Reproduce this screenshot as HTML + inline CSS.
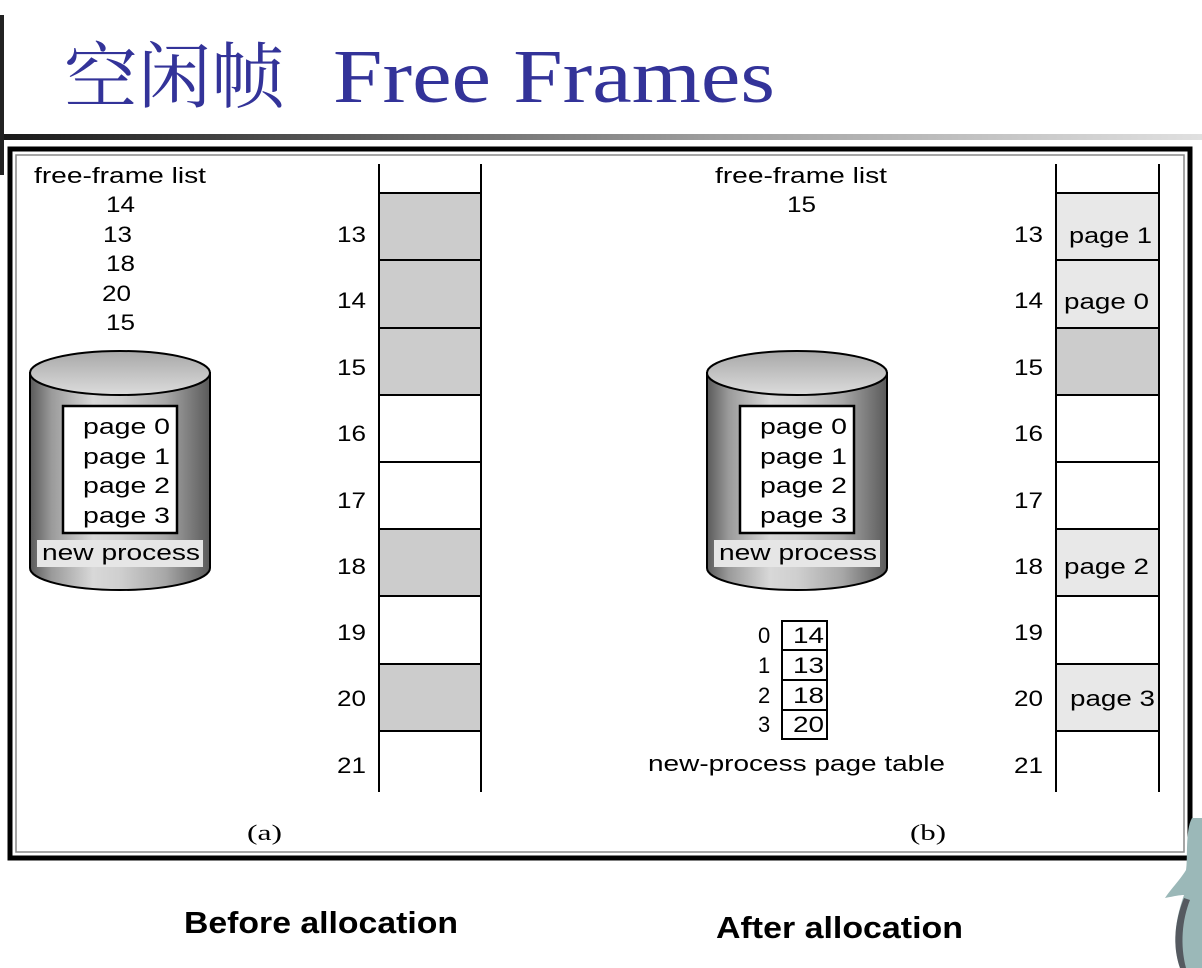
<!DOCTYPE html>
<html><head><meta charset="utf-8"><style>
html,body{margin:0;padding:0;background:#fff;width:1202px;height:968px;overflow:hidden}
svg text{font-family:"Liberation Sans",sans-serif}
</style></head><body>
<svg width="1202" height="968" viewBox="0 0 1202 968" xmlns="http://www.w3.org/2000/svg">
<defs>
<linearGradient id="hl" x1="0" x2="1"><stop offset="0" stop-color="#1a1a1a"/><stop offset="0.6" stop-color="#a0a0a0"/><stop offset="1" stop-color="#e0e0e0"/></linearGradient>
<linearGradient id="cyl" x1="0" x2="1">
<stop offset="0" stop-color="#5a5a5a"/><stop offset="0.12" stop-color="#9a9a9a"/><stop offset="0.35" stop-color="#d8d8d8"/><stop offset="0.5" stop-color="#cfcfcf"/><stop offset="0.75" stop-color="#a8a8a8"/><stop offset="1" stop-color="#5a5a5a"/></linearGradient>
<linearGradient id="top" x1="0" y1="0" x2="0" y2="1"><stop offset="0" stop-color="#a8a8a8"/><stop offset="1" stop-color="#dcdcdc"/></linearGradient>
</defs>
<rect x="0" y="15" width="4" height="160" fill="#222"/>
<rect x="4" y="134" width="1198" height="6" fill="url(#hl)"/>
<text x="64" y="102" font-size="72" fill="#333399" textLength="221" lengthAdjust="spacingAndGlyphs" style="font-family:'Noto Serif CJK SC',serif">空闲帧</text>
<text x="333" y="102" font-size="76" fill="#333399" textLength="442" lengthAdjust="spacingAndGlyphs" style="font-family:'Liberation Serif',serif">Free Frames</text>
<rect x="10" y="149" width="1180" height="709" fill="#fff" stroke="#000" stroke-width="5"/>
<rect x="16" y="155" width="1168" height="697" fill="none" stroke="#888" stroke-width="1.5"/>

<g>
<rect x="379" y="193" width="102" height="201" fill="#cccccc"/>
<rect x="379" y="529" width="102" height="67" fill="#cccccc"/>
<rect x="379" y="664" width="102" height="67" fill="#cccccc"/>
<g stroke="#000" stroke-width="2">
<line x1="379" y1="164" x2="379" y2="792"/><line x1="481" y1="164" x2="481" y2="792"/>
<line x1="379" y1="193" x2="481" y2="193"/><line x1="379" y1="260" x2="481" y2="260"/><line x1="379" y1="328" x2="481" y2="328"/><line x1="379" y1="395" x2="481" y2="395"/><line x1="379" y1="462" x2="481" y2="462"/><line x1="379" y1="529" x2="481" y2="529"/><line x1="379" y1="596" x2="481" y2="596"/><line x1="379" y1="664" x2="481" y2="664"/><line x1="379" y1="731" x2="481" y2="731"/>
</g>
<g font-size="22" fill="#000" lengthAdjust="spacingAndGlyphs">
<text x="337" y="242" textLength="29" lengthAdjust="spacingAndGlyphs">13</text><text x="337" y="308" textLength="29" lengthAdjust="spacingAndGlyphs">14</text><text x="337" y="375" textLength="29" lengthAdjust="spacingAndGlyphs">15</text><text x="337" y="441" textLength="29" lengthAdjust="spacingAndGlyphs">16</text><text x="337" y="508" textLength="29" lengthAdjust="spacingAndGlyphs">17</text><text x="337" y="574" textLength="29" lengthAdjust="spacingAndGlyphs">18</text><text x="337" y="640" textLength="29" lengthAdjust="spacingAndGlyphs">19</text><text x="337" y="706" textLength="29" lengthAdjust="spacingAndGlyphs">20</text><text x="337" y="773" textLength="29" lengthAdjust="spacingAndGlyphs">21</text>
</g>
</g>
<g>
<rect x="1056" y="193" width="103" height="134" fill="#e8e8e8"/>
<rect x="1056" y="328" width="103" height="67" fill="#cccccc"/>
<rect x="1056" y="529" width="103" height="67" fill="#e8e8e8"/>
<rect x="1056" y="664" width="103" height="67" fill="#e8e8e8"/>
<g stroke="#000" stroke-width="2">
<line x1="1056" y1="164" x2="1056" y2="792"/><line x1="1159" y1="164" x2="1159" y2="792"/>
<line x1="1056" y1="193" x2="1159" y2="193"/><line x1="1056" y1="260" x2="1159" y2="260"/><line x1="1056" y1="328" x2="1159" y2="328"/><line x1="1056" y1="395" x2="1159" y2="395"/><line x1="1056" y1="462" x2="1159" y2="462"/><line x1="1056" y1="529" x2="1159" y2="529"/><line x1="1056" y1="596" x2="1159" y2="596"/><line x1="1056" y1="664" x2="1159" y2="664"/><line x1="1056" y1="731" x2="1159" y2="731"/>
</g>
<g font-size="22" fill="#000">
<text x="1014" y="242" textLength="29" lengthAdjust="spacingAndGlyphs">13</text><text x="1014" y="308" textLength="29" lengthAdjust="spacingAndGlyphs">14</text><text x="1014" y="375" textLength="29" lengthAdjust="spacingAndGlyphs">15</text><text x="1014" y="441" textLength="29" lengthAdjust="spacingAndGlyphs">16</text><text x="1014" y="508" textLength="29" lengthAdjust="spacingAndGlyphs">17</text><text x="1014" y="574" textLength="29" lengthAdjust="spacingAndGlyphs">18</text><text x="1014" y="640" textLength="29" lengthAdjust="spacingAndGlyphs">19</text><text x="1014" y="706" textLength="29" lengthAdjust="spacingAndGlyphs">20</text><text x="1014" y="773" textLength="29" lengthAdjust="spacingAndGlyphs">21</text>
<text x="1069" y="243" textLength="83" lengthAdjust="spacingAndGlyphs">page 1</text><text x="1064" y="309" textLength="85" lengthAdjust="spacingAndGlyphs">page 0</text><text x="1064" y="574" textLength="85" lengthAdjust="spacingAndGlyphs">page 2</text><text x="1070" y="706" textLength="85" lengthAdjust="spacingAndGlyphs">page 3</text>
</g>
</g>

<g font-size="22" fill="#000">
<text x="34" y="183" textLength="172" lengthAdjust="spacingAndGlyphs">free-frame list</text>
<text x="106" y="212" textLength="29" lengthAdjust="spacingAndGlyphs">14</text><text x="103" y="242" textLength="29" lengthAdjust="spacingAndGlyphs">13</text><text x="106" y="271" textLength="29" lengthAdjust="spacingAndGlyphs">18</text><text x="102" y="301" textLength="29" lengthAdjust="spacingAndGlyphs">20</text><text x="106" y="330" textLength="29" lengthAdjust="spacingAndGlyphs">15</text>
<text x="715" y="183" textLength="172" lengthAdjust="spacingAndGlyphs">free-frame list</text><text x="787" y="212" textLength="29" lengthAdjust="spacingAndGlyphs">15</text>
</g>

<g id="cy">
<path d="M30 373 L30 568 A90 22 0 0 0 210 568 L210 373 Z" fill="url(#cyl)" stroke="#000" stroke-width="2"/>
<ellipse cx="120" cy="373" rx="90" ry="22" fill="url(#top)" stroke="#000" stroke-width="2"/>
<rect x="63" y="406" width="114" height="127" fill="#fff" stroke="#000" stroke-width="2.5"/>
<rect x="37" y="540" width="166" height="27" fill="#e6e6e6"/>
<g font-size="22" fill="#000">
<text x="83" y="434" textLength="87" lengthAdjust="spacingAndGlyphs">page 0</text><text x="83" y="464" textLength="87" lengthAdjust="spacingAndGlyphs">page 1</text><text x="83" y="493" textLength="87" lengthAdjust="spacingAndGlyphs">page 2</text><text x="83" y="523" textLength="87" lengthAdjust="spacingAndGlyphs">page 3</text>
<text x="42" y="560" textLength="158" lengthAdjust="spacingAndGlyphs">new process</text>
</g>
</g>
<use href="#cy" x="677"/>

<g>
<rect x="782" y="621" width="45" height="118" fill="#fff" stroke="#000" stroke-width="2"/>
<g stroke="#000" stroke-width="2"><line x1="782" y1="650" x2="827" y2="650"/><line x1="782" y1="680" x2="827" y2="680"/><line x1="782" y1="710" x2="827" y2="710"/></g>
<g font-size="22" fill="#000">
<text x="758" y="643">0</text><text x="758" y="673">1</text><text x="758" y="703">2</text><text x="758" y="732">3</text>
<text x="793" y="643" textLength="31" lengthAdjust="spacingAndGlyphs">14</text><text x="793" y="673" textLength="31" lengthAdjust="spacingAndGlyphs">13</text><text x="793" y="703" textLength="31" lengthAdjust="spacingAndGlyphs">18</text><text x="793" y="732" textLength="31" lengthAdjust="spacingAndGlyphs">20</text>
<text x="648" y="771" textLength="297" lengthAdjust="spacingAndGlyphs">new-process page table</text>
</g>
</g>
<text x="247" y="840" font-size="22" textLength="35" lengthAdjust="spacingAndGlyphs" style="font-family:'Liberation Serif',serif">(a)</text>
<text x="910" y="840" font-size="22" textLength="36" lengthAdjust="spacingAndGlyphs" style="font-family:'Liberation Serif',serif">(b)</text>
<text x="184" y="933" font-size="31" font-weight="bold" fill="#000" textLength="274" lengthAdjust="spacingAndGlyphs">Before allocation</text>
<text x="716" y="938" font-size="31" font-weight="bold" fill="#000" textLength="247" lengthAdjust="spacingAndGlyphs">After allocation</text>

<path d="M1192 818 C1185 830 1188 860 1186 870 C1180 880 1170 890 1165 898 C1175 896 1180 895 1184 895 C1175 920 1172 945 1180 968 L1202 968 L1202 818 Z" fill="#9bb8b8"/>
<path d="M1184 898 C1175 920 1172 945 1180 968 L1186 968 C1180 945 1182 920 1190 900 Z" fill="#555a60"/>
</svg>
</body></html>
